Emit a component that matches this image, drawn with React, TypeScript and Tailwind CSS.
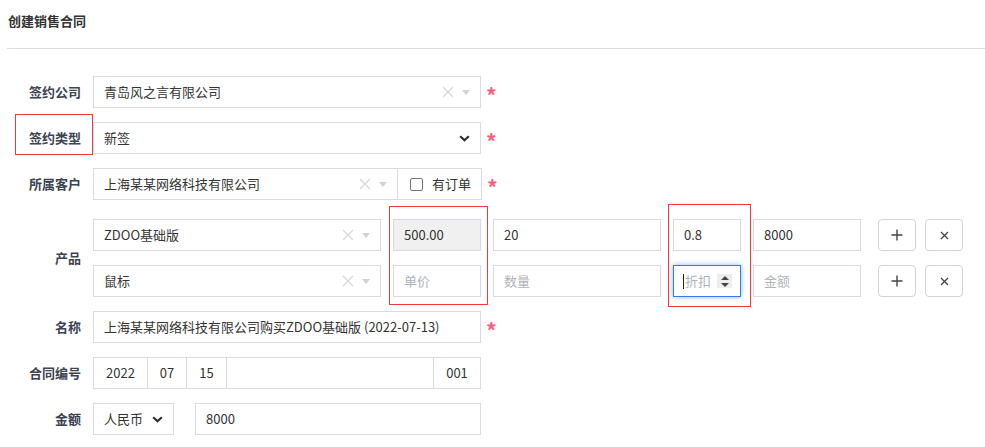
import React from 'react';

const FONT = { fontFamily: '"Noto Sans CJK SC", "Noto Sans", sans-serif' };

const Label: React.FC<{ text: string; boxed?: boolean }> = ({ text, boxed }) => (
  <div className="relative w-[93px] shrink-0 pr-[12px] text-right text-[13px] font-bold text-[#3c4353]">
    {text}
    {boxed && (
      <span className="pointer-events-none absolute left-[15px] top-[-14px] h-[41px] w-[78px] border border-[#f03b3b]" />
    )}
  </div>
);

const Required = () => (
  <span className="ml-[5px] mt-[7px] text-[21px] font-bold leading-none text-[#ff5b7d]">*</span>
);

const ChosenTail = () => (
  <div className="flex items-center gap-[8px] pr-[10px]">
    <svg width="12" height="12" viewBox="0 0 12 12">
      <path d="M1 1L11 11M11 1L1 11" stroke="#d6d8dc" strokeWidth="1.3" />
    </svg>
    <svg width="8" height="5" viewBox="0 0 8 5">
      <path d="M0 0H8L4 5Z" fill="#d0d2d6" />
    </svg>
  </div>
);

const Chevron = () => (
  <svg width="11" height="7" viewBox="0 0 11 7">
    <path d="M1.2 1.2L5.5 5.3L9.8 1.2" stroke="#2b2f36" strokeWidth="2.2" fill="none" />
  </svg>
);

const base = 'h-8 border border-[#d8dbe3] flex items-center text-[13px] text-[#333]';
const box = `${base} bg-white`;

const Field: React.FC<{ value?: string; placeholder?: string; gray?: boolean }> = ({
  value,
  placeholder,
  gray,
}) => (
  <div className={`${base} px-[10px] ${gray ? 'bg-[#f0f0f0]' : 'bg-white'}`}>
    {value ? value : <span className="text-[#b0b3ba]">{placeholder}</span>}
  </div>
);

const IconButton: React.FC<{ kind: 'plus' | 'x' }> = ({ kind }) => (
  <div className="flex h-8 w-[38px] items-center justify-center rounded-[4px] border border-[#d3d3d3] bg-white">
    {kind === 'plus' ? (
      <svg width="12" height="12" viewBox="0 0 12 12">
        <path d="M6 0.5V11.5M0.5 6H11.5" stroke="#444" strokeWidth="1.4" />
      </svg>
    ) : (
      <svg width="9" height="9" viewBox="0 0 9 9">
        <path d="M1 1L8 8M8 1L1 8" stroke="#444" strokeWidth="1.3" />
      </svg>
    )}
  </div>
);

export default function App() {
  return (
    <div className="h-[447px] w-[985px] overflow-hidden bg-white" style={FONT}>
      {/* header */}
      <div className="ml-[7px] h-[49px] border-b border-[#dcdde6] pl-[1px] pt-[12px] text-[13px] font-bold leading-[18px] text-[#333]">
        创建销售合同
      </div>

      <div className="mt-[27px] flex flex-col gap-[14px]">
        {/* 签约公司 */}
        <div className="flex items-center">
          <Label text="签约公司" />
          <div className={`${box} w-[388px] justify-between pl-[10px]`}>
            <span>青岛风之言有限公司</span>
            <ChosenTail />
          </div>
          <Required />
        </div>

        {/* 签约类型 */}
        <div className="flex items-center">
          <Label text="签约类型" boxed />
          <div className={`${box} w-[388px] justify-between pl-[10px] pr-[10px]`}>
            <span>新签</span>
            <Chevron />
          </div>
          <Required />
        </div>

        {/* 所属客户 */}
        <div className="flex items-center">
          <Label text="所属客户" />
          <div className={`${box} w-[305px] justify-between pl-[10px]`}>
            <span>上海某某网络科技有限公司</span>
            <ChosenTail />
          </div>
          <div className={`${box} -ml-px w-[85px] gap-[9px] pl-[12px]`}>
            <span className="h-[13px] w-[13px] rounded-[2px] border border-[#767676]" />
            <span>有订单</span>
          </div>
          <Required />
        </div>

        {/* 产品 */}
        <div className="mt-[5px] flex items-center">
          <Label text="产品" />
          <div className="grid grid-cols-[288px_88px_168px_68px_108px_90px] gap-x-3 gap-y-[14px]">
            <div className={`${box} col-start-1 row-start-1 justify-between pl-[10px]`}>
              <span>ZDOO基础版</span>
              <ChosenTail />
            </div>
            <div className="col-start-2 row-start-1">
              <Field value="500.00" gray />
            </div>
            <div className="col-start-3 row-start-1">
              <Field value="20" />
            </div>
            <div className="col-start-4 row-start-1">
              <Field value="0.8" />
            </div>
            <div className="col-start-5 row-start-1">
              <Field value="8000" />
            </div>
            <div className="col-start-6 row-start-1 flex gap-[9px] pl-[5px]">
              <IconButton kind="plus" />
              <IconButton kind="x" />
            </div>

            <div className={`${box} col-start-1 row-start-2 justify-between pl-[10px]`}>
              <span>鼠标</span>
              <ChosenTail />
            </div>
            <div className="col-start-2 row-start-2">
              <Field placeholder="单价" />
            </div>
            <div className="col-start-3 row-start-2">
              <Field placeholder="数量" />
            </div>
            <div className="col-start-4 row-start-2">
              <div className="flex h-8 items-center justify-between border border-[#2f7cf0] bg-white pl-[9px] pr-[8px] text-[13px] shadow-[0_0_5px_rgba(47,124,240,0.55)]">
                <span className="flex items-center">
                  <span className="mr-px h-[15px] w-px bg-[#222]" />
                  <span className="text-[#b0b3ba]">折扣</span>
                </span>
                <span className="flex h-[14px] w-[15px] items-center justify-center bg-[#ededed]">
                  <svg width="8" height="11" viewBox="0 0 8 11">
                    <path d="M4 0L8 4H0Z M4 11L0 7H8Z" fill="#444" />
                  </svg>
                </span>
              </div>
            </div>
            <div className="col-start-5 row-start-2">
              <Field placeholder="金额" />
            </div>
            <div className="col-start-6 row-start-2 flex gap-[9px] pl-[5px]">
              <IconButton kind="plus" />
              <IconButton kind="x" />
            </div>

            {/* annotation boxes */}
            <div className="pointer-events-none col-start-2 row-span-2 row-start-1 -mb-[8px] -ml-[4px] -mr-[7px] -mt-[13px] border border-[#f03b3b]" />
            <div className="pointer-events-none col-start-4 row-span-2 row-start-1 -mb-[10px] -ml-[5px] -mr-[10px] -mt-[15px] border border-[#f03b3b]" />
          </div>
        </div>

        {/* 名称 */}
        <div className="flex items-center">
          <Label text="名称" />
          <div className={`${box} w-[388px] pl-[10px]`}>上海某某网络科技有限公司购买ZDOO基础版 (2022-07-13)</div>
          <Required />
        </div>

        {/* 合同编号 */}
        <div className="flex items-center">
          <Label text="合同编号" />
          <div className="flex w-[388px]">
            <div className={`${box} w-[55px] justify-center`}>2022</div>
            <div className={`${box} -ml-px w-[40px] justify-center`}>07</div>
            <div className={`${box} -ml-px w-[41px] justify-center`}>15</div>
            <div className={`${box} -ml-px flex-1`} />
            <div className={`${box} -ml-px w-[48px] justify-center`}>001</div>
          </div>
        </div>

        {/* 金额 */}
        <div className="flex items-center">
          <Label text="金额" />
          <div className={`${box} w-[81px] justify-between pl-[10px] pr-[10px]`}>
            <span>人民币</span>
            <Chevron />
          </div>
          <div className={`${box} ml-[21px] w-[286px] pl-[10px]`}>8000</div>
        </div>
      </div>
    </div>
  );
}
